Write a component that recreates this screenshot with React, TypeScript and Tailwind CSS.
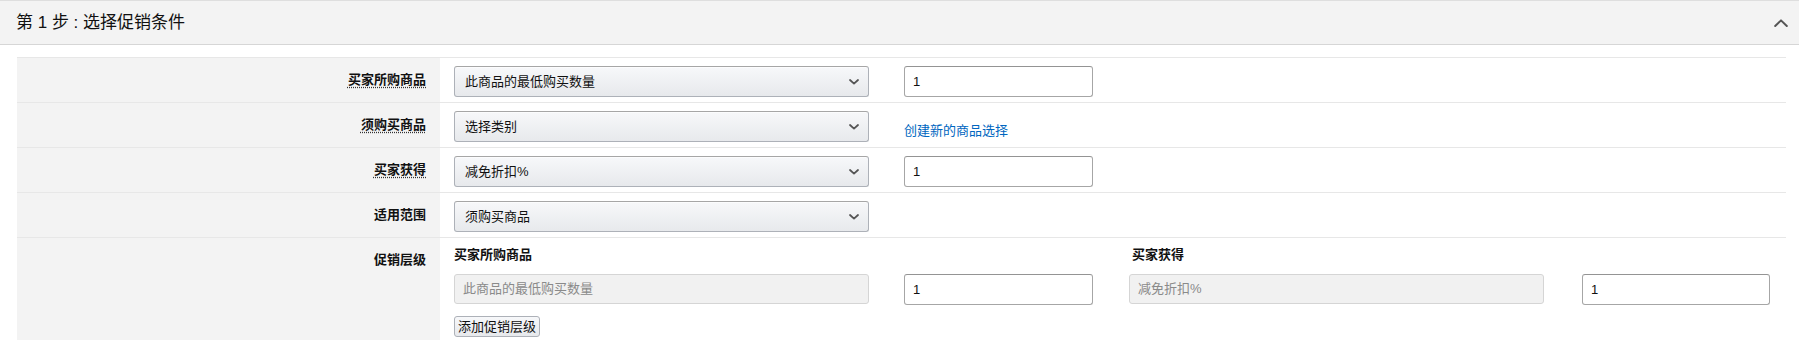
import React from "react";

/**
 * Step 1 of the promotion wizard: pick the promotion conditions.
 * Static recreation — values are fixed, nothing is submitted.
 */

const FONT = "font-['Liberation_Sans','Noto_Sans_CJK_SC',sans-serif]";

function ChevronDown(): JSX.Element {
  return (
    <svg width="10" height="6" viewBox="0 0 10 6" fill="none" aria-hidden>
      <path d="M1 1l4 3.6L9 1" stroke="#555" strokeWidth="1.8" strokeLinecap="round" strokeLinejoin="round" />
    </svg>
  );
}

function ChevronUp(): JSX.Element {
  return (
    <svg width="14" height="8" viewBox="0 0 14 8" fill="none" aria-hidden>
      <path d="M1.2 7L7 1.4 12.8 7" stroke="#555" strokeWidth="2" strokeLinecap="round" strokeLinejoin="round" />
    </svg>
  );
}

function FakeSelect({ value }: { value: string }): JSX.Element {
  return (
    <div className="flex h-[31px] w-[415px] items-center justify-between rounded-[3px] border border-[#adb1b8] border-t-[#a6a6a6] bg-gradient-to-b from-[#f7f8fa] to-[#e7e9ec] pl-[10px] pr-[9px] text-[13px] text-[#111] shadow-[0_1px_0_rgba(255,255,255,0.6)_inset]">
      <span>{value}</span>
      <ChevronDown />
    </div>
  );
}

function NumInput({ width = "w-[189px]" }: { width?: string }): JSX.Element {
  return (
    <input
      defaultValue="1"
      className={`h-[31px] ${width} rounded-[3px] border border-[#a6a6a6] border-t-[#949494] bg-white pl-[8px] text-[13px] text-[#111] outline-none`}
    />
  );
}

function DisabledField({ value }: { value: string }): JSX.Element {
  return (
    <div className="flex h-[30px] w-[415px] items-center rounded-[3px] border border-[#d5d5d5] bg-[#f1f1f1] pl-[8px] text-[13px] text-[#8a8a8a]">
      {value}
    </div>
  );
}

function Label({ text, dotted }: { text: string; dotted?: boolean }): JSX.Element {
  return (
    <div className="w-[423px] shrink-0 bg-[#f3f3f3] pr-[14px] pt-[9px] text-right">
      <span
        className={`text-[13px] font-bold leading-[17px] text-[#111] ${
          dotted ? "underline decoration-[#333] decoration-dotted underline-offset-[3px]" : ""
        }`}
      >
        {text}
      </span>
    </div>
  );
}

function Row({ label, dotted, children }: { label: string; dotted?: boolean; children: React.ReactNode }): JSX.Element {
  return (
    <div className="flex h-[45px] border-t border-[#e7e7e7]">
      <Label text={label} dotted={dotted} />
      <div className="flex flex-1 items-start gap-[35px] pl-[14px] pt-2">{children}</div>
    </div>
  );
}

export default function App(): JSX.Element {
  return (
    <div className={`${FONT} h-[340px] w-full overflow-hidden bg-white`}>
      {/* Section header */}
      <div className="flex h-[45px] items-center justify-between border-y border-t-[#dedede] border-b-[#d6d6d6] bg-[#f3f3f3] pl-4 pr-[11px]">
        <h2 className="text-[17px] font-normal text-[#111]">第 1 步 : 选择促销条件</h2>
        <ChevronUp />
      </div>

      <div className="ml-[17px] mr-[13px] mt-3">
        <Row label="买家所购商品" dotted>
          <FakeSelect value="此商品的最低购买数量" />
          <NumInput />
        </Row>
        <Row label="须购买商品" dotted>
          <FakeSelect value="选择类别" />
          <a href="#" className="pt-[10px] text-[13px] text-[#0066c0] hover:underline">
            创建新的商品选择
          </a>
        </Row>
        <Row label="买家获得" dotted>
          <FakeSelect value="减免折扣%" />
          <NumInput />
        </Row>
        <Row label="适用范围">
          <FakeSelect value="须购买商品" />
        </Row>

        {/* Promotion tiers */}
        <div className="flex h-[120px] border-t border-[#e7e7e7]">
          <Label text="促销层级" />
          <div className="flex flex-1 items-start pl-[14px] pt-2">
            <div className="flex w-[415px] flex-col">
              <p className="text-[13px] font-bold leading-[17px] text-[#111]">买家所购商品</p>
              <div className="mt-[11px]">
                <DisabledField value="此商品的最低购买数量" />
              </div>
              <button
                type="button"
                className="mt-3 h-[21px] w-[86px] rounded-[3px] border border-[#adb1b8] bg-gradient-to-b from-[#f7f8fa] to-[#e7e9ec] text-[13px] leading-none text-[#111]"
              >
                添加促销层级
              </button>
            </div>
            <div className="ml-[35px] flex w-[189px] flex-col">
              <p className="h-[17px]" />
              <div className="mt-[11px]">
                <NumInput />
              </div>
            </div>
            <div className="ml-[36px] flex w-[415px] flex-col">
              <p className="pl-[3px] text-[13px] font-bold leading-[17px] text-[#111]">买家获得</p>
              <div className="mt-[11px]">
                <DisabledField value="减免折扣%" />
              </div>
            </div>
            <div className="ml-[38px] flex w-[188px] flex-col">
              <p className="h-[17px]" />
              <div className="mt-[11px]">
                <NumInput width="w-[188px]" />
              </div>
            </div>
          </div>
        </div>
      </div>
    </div>
  );
}
